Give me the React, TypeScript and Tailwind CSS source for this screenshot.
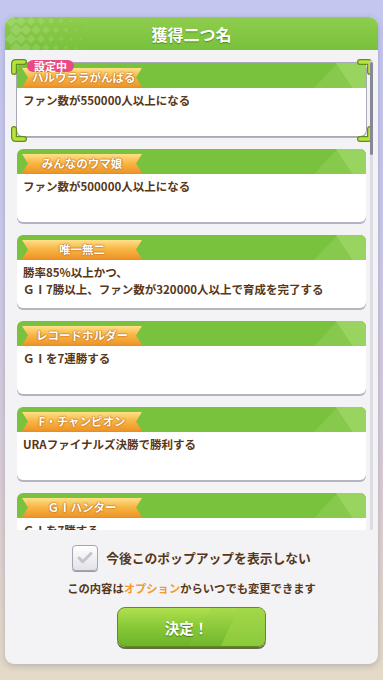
import { Check } from "lucide-react";

const FONT = { fontFamily: '"Noto Sans CJK JP", "Noto Sans", sans-serif' };

type Title = { name: string; desc: string[]; active?: boolean };

const TITLES: Title[] = [
  { name: "ハルウララがんばる", desc: ["ファン数が550000人以上になる"], active: true },
  { name: "みんなのウマ娘", desc: ["ファン数が500000人以上になる"] },
  { name: "唯一無二", desc: ["勝率85%以上かつ、", "ＧⅠ7勝以上、ファン数が320000人以上で育成を完了する"] },
  { name: "レコードホルダー", desc: ["ＧⅠを7連勝する"] },
  { name: "F・チャンピオン", desc: ["URAファイナルズ決勝で勝利する"] },
  { name: "ＧⅠハンター", desc: ["ＧⅠを7勝する"] },
];

function HeaderPattern() {
  // faded diamond grid on the left of the title bar
  const cells = [];
  for (let c = 0; c < 8; c++) {
    for (let r = 0; r < 4; r++) {
      const size = Math.max(1.5, 6 - c * 0.7);
      const cx = 6 + c * 10 + (r % 2) * 5;
      const cy = 4 + r * 9;
      cells.push(
        <path
          key={`${c}-${r}`}
          d={`M${cx} ${cy - size} L${cx + size} ${cy} L${cx} ${cy + size} L${cx - size} ${cy} Z`}
          fill="#ffffff"
          fillOpacity={0.16 - c * 0.012}
        />
      );
    }
  }
  return (
    <svg className="absolute left-0 top-0" width="90" height="33" viewBox="0 0 90 33">
      {cells}
    </svg>
  );
}

function Bracket({ className, rotate }: { className: string; rotate: number }) {
  return (
    <svg className={`absolute ${className}`} width="16" height="16" viewBox="0 0 16 16" style={{ transform: `rotate(${rotate}deg)` }}>
      <path d="M3 13 V5 Q3 3 5 3 H13" fill="none" stroke="#5f8f1c" strokeWidth="6" strokeLinecap="round" strokeLinejoin="round" />
      <path d="M3 13 V5 Q3 3 5 3 H13" fill="none" stroke="#b8e23e" strokeWidth="3.6" strokeLinecap="round" strokeLinejoin="round" />
    </svg>
  );
}

function TitleCard({ t }: { t: Title }) {
  return (
    <div className="relative">
      <div
        className={`rounded-[6px] overflow-hidden bg-white shadow-[0_2px_0_#b4b4c0] ${
          t.active ? "ring-1 ring-[#a9a9b6]" : ""
        }`}
      >
        {/* green strip with ribbon */}
        <div className="relative h-[25px] bg-[#78c23e]">
          <div className="absolute right-0 top-0 h-full w-[52px] bg-[#86c94c] [clip-path:polygon(45%_0,100%_0,100%_100%,0_100%)]" />
          <div className="absolute right-0 top-0 h-full w-[30px] bg-[#99d360] [clip-path:polygon(0_0,100%_0,100%_100%,55%_100%)]" />
          <div className="absolute left-[5px] top-[5px] h-[19px] w-[120px] bg-[linear-gradient(180deg,#ffe08a_0%,#f8b848_45%,#ee9426_100%)] [clip-path:polygon(0_0,100%_0,calc(100%-6px)_50%,100%_100%,0_100%,6px_50%)] flex items-center">
            <span
              className={`w-full text-[11.5px] font-bold text-white leading-none [text-shadow:0_0_2px_#b05a10,0_0_1px_#b05a10] ${
                t.active ? "pl-[10px] text-left" : "text-center"
              }`}
            >
              {t.name}
            </span>
          </div>
        </div>
        <div className="h-[48px] px-[6px] pt-[4px] text-[11.5px] font-bold leading-[17px] text-[#573719]">
          {t.desc.map((d) => (
            <p key={d}>{d}</p>
          ))}
        </div>
      </div>

      {t.active && (
        <>
          <span className="absolute left-[10px] top-[-3px] rounded-full bg-[#ea4a82] px-[7px] text-[11px] font-bold leading-[12px] text-white">
            設定中
          </span>
          <Bracket className="left-[-6px] top-[-4px]" rotate={0} />
          <Bracket className="right-[-7px] top-[-4px]" rotate={90} />
          <Bracket className="right-[-7px] bottom-[-6px]" rotate={180} />
          <Bracket className="left-[-6px] bottom-[-6px]" rotate={270} />
        </>
      )}
    </div>
  );
}

export default function App() {
  return (
    <div
      style={FONT}
      className="h-[680px] w-[383px] overflow-hidden bg-[linear-gradient(180deg,#c3c6f0_0%,#ccc9ea_35%,#d9cdd6_70%,#e4dac6_100%)] pt-[17px]"
    >
      <div className="mx-[5px] h-[647px] overflow-hidden rounded-[9px] bg-[#f3f3f5] shadow-[0_2px_6px_rgba(60,60,90,0.25)] flex flex-col">
        {/* Title bar */}
        <div className="relative h-[33px] shrink-0 bg-[linear-gradient(180deg,#8fcd4e_0%,#78c13c_100%)] flex items-center justify-center">
          <HeaderPattern />
          <h1 className="relative text-[16px] font-bold text-white [text-shadow:0_1px_1px_#4f8a1e]">獲得二つ名</h1>
        </div>

        {/* List */}
        <div className="relative h-[480px] shrink-0 overflow-hidden">
          <div className="flex flex-col gap-[13px] pl-[12px] pr-[12px] pt-[13px]">
            {TITLES.map((t) => (
              <TitleCard key={t.name} t={t} />
            ))}
          </div>
          {/* scrollbar */}
          <div className="absolute right-[5px] top-[10px] bottom-0 w-[3px] rounded-full bg-[#dcdce2]" />
          <div className="absolute right-[5px] top-[12px] h-[93px] w-[3px] rounded-full bg-[#878796]" />
        </div>

        {/* Footer */}
        <div className="flex flex-1 flex-col items-center pt-[15px]">
          <div className="flex items-center gap-[8px]">
            <div className="flex h-[26px] w-[26px] items-center justify-center rounded-[4px] border border-[#a4a4b4] bg-[linear-gradient(180deg,#ffffff_0%,#e2e2e8_100%)] shadow-[0_1px_0_#9a9aaa]">
              <Check className="h-[18px] w-[18px] text-[#c4c4cc]" strokeWidth={4} />
            </div>
            <span className="text-[12.8px] font-bold text-[#573719]">今後このポップアップを表示しない</span>
          </div>
          <p className="mt-[9px] text-[11.3px] font-bold text-[#573719]">
            この内容は<span className="text-[#f39a2c]">オプション</span>からいつでも変更できます
          </p>
          <button className="relative mt-[10px] h-[40px] w-[149px] overflow-hidden rounded-[8px] border-[1.5px] border-[#5d8d1f] bg-[linear-gradient(180deg,#b0e04e_0%,#84c636_55%,#6eb42a_100%)] shadow-[0_2px_0_#6a6a4a]">
            <div className="absolute right-0 top-0 h-full w-[52%] bg-[linear-gradient(180deg,#a6da4c_0%,#72b82c_100%)] [clip-path:polygon(30%_0,100%_0,100%_100%,0_100%,12%_50%)] opacity-80" />
            <div className="absolute right-0 top-0 h-full w-[30%] bg-[#9fd64a] [clip-path:polygon(40%_0,100%_0,100%_100%,0_100%)] opacity-60" />
            <span className="relative pr-[10px] text-[14.5px] font-bold text-white [text-shadow:0_1px_1px_#467a14]">決定！</span>
          </button>
        </div>
      </div>
    </div>
  );
}
